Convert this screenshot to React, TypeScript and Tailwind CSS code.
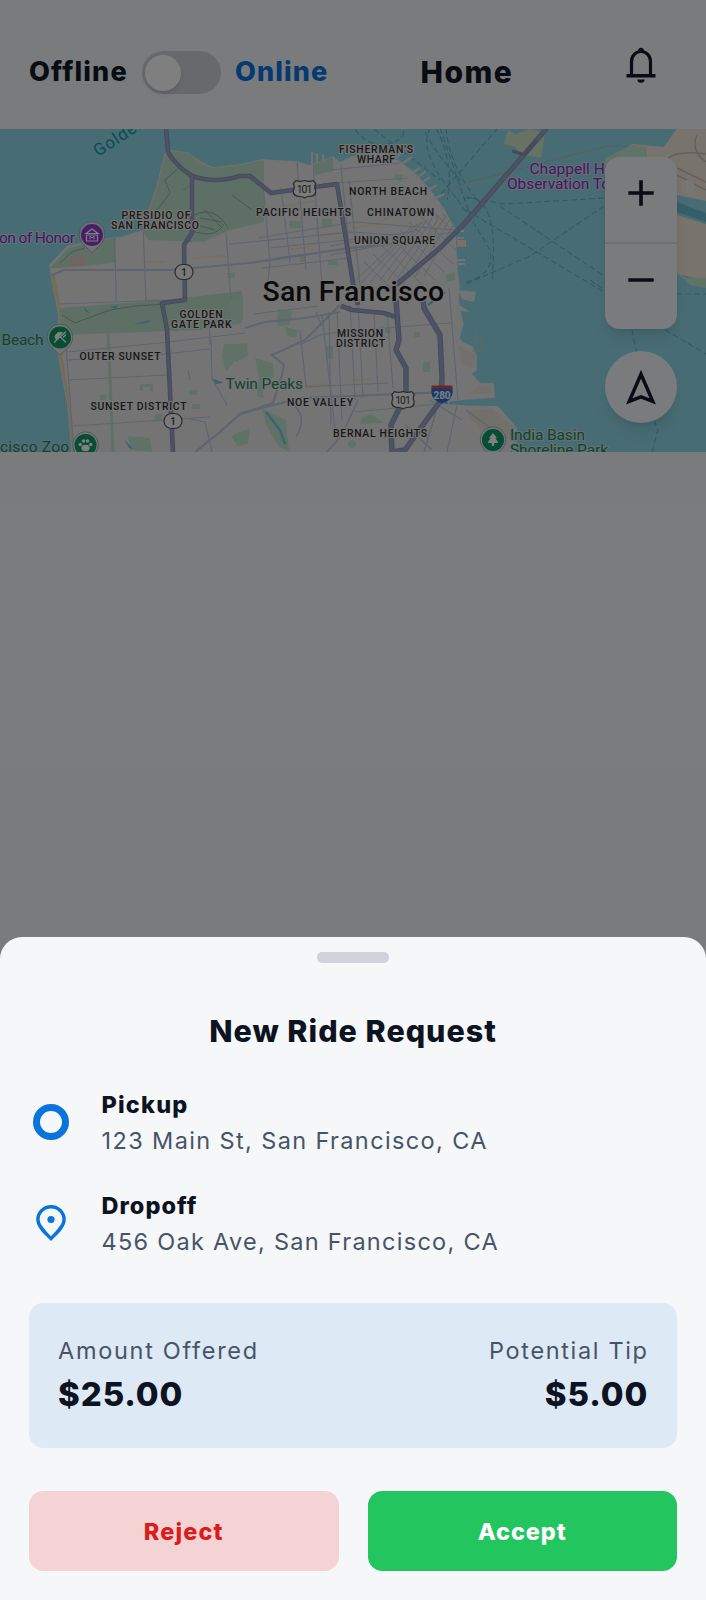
import type { ReactNode } from "react";

const LAND =
  "M167 151 L173 151 L187 153 L200 162 L213 168 L240 165 L262 160 L297 162 L310 166 L333 157 L340 163 L352 157 L380 152 L397 160 L413 172 L428 188 L443 208 L455 230 L456 252 L457 270 L459 287 L458 300 L460 312 L463 324 L459 338 L463 343 L472 347 L476 356 L476 370 L471 374 L480 384 L493 384 L494 397 L466 399 L448 401 L448 405 L466 406 L498 407 L516 428 L516 453 L72 453 L68 405 L58 352 L59 315 L52 280 L50 265 L67 247 L93 241 L123 237 L143 231 L148 213 L157 187 L165 155 Z";

function Street({ d, w = 1.2 }: { d: string; w?: number }) {
  return <path d={d} fill="none" stroke="#bfc8dc" strokeWidth={w} />;
}

function Highway({ d, w = 4.6 }: { d: string; w?: number }) {
  return (
    <g fill="none" strokeLinejoin="round">
      <path d={d} stroke="#8993b8" strokeWidth={w} />
      <path d={d} stroke="#9ca6c8" strokeWidth={w - 2} />
    </g>
  );
}

type LabelProps = {
  x: number;
  y: number;
  w: number;
  size?: number;
  fill?: string;
  weight?: number;
  halo?: string;
  children: string;
};

function Label({ x, y, w, size = 10.4, fill = "#303030", weight = 500, halo = "#eaeaea", children }: LabelProps) {
  return (
    <text
      x={x}
      y={y}
      textLength={w}
      fontSize={size}
      fontWeight={weight}
      fill={fill}
      stroke={halo}
      strokeWidth={2.2}
      strokeLinejoin="round"
      paintOrder="stroke"
    >
      {children}
    </text>
  );
}

function Pin({ x, y, fill, children }: { x: number; y: number; fill: string; children: ReactNode }) {
  return (
    <g transform={`translate(${x} ${y})`}>
      <path d="M0 17.5 C-3 14 -12.8 9 -12.8 -0.5 A12.8 12.8 0 0 1 12.8 -0.5 C12.8 9 3 14 0 17.5Z" fill="#e6e9ea" stroke="#8fa5aa" strokeWidth="0.8" />
      <circle r="11" fill={fill} />
      {children}
    </g>
  );
}

function StateRoute({ x, y }: { x: number; y: number }) {
  return (
    <g>
      <rect x={x - 9} y={y - 7.5} width="18" height="15" rx="7.5" fill="#f2f2f2" stroke="#555" strokeWidth="1.2" />
      <text x={x} y={y + 4} textAnchor="middle" fontSize="10.5" fontWeight="500" fill="#444">1</text>
    </g>
  );
}

function UsRoute({ x, y }: { x: number; y: number }) {
  return (
    <g transform={`translate(${x} ${y})`}>
      <path d="M-8.5 -8.5 Q-5 -6.8 0 -8.5 Q5 -6.8 8.5 -8.5 L11.2 -5.5 Q9.4 -2 11 1 Q12 6 7 7.3 Q2.5 7 0 9 Q-2.5 7 -7 7.3 Q-12 6 -11 1 Q-9.4 -2 -11.2 -5.5Z" fill="#f2f2f2" stroke="#555" strokeWidth="1.2" />
      <text x="0" y="3.8" textAnchor="middle" fontSize="10.4" textLength="15.5" fill="#444">101</text>
    </g>
  );
}

const VERTICALS = [
  "M114 230 L116 285 L116 302", "M143 225 L146 302", "M226 233 L231 300", "M297 162 L306 270", "M263 184 L270 262 L266 300",
  "M281 188 L290 262", "M313 162 L322 285", "M341 165 L352 280", "M349 180 L360 285", "M322 315 L335 430", "M329 312 L331 424",
  "M337 312 L342 420", "M350 305 L355 400", "M358 305 L363 398", "M374 312 L378 392", "M387 312 L393 388", "M300 330 L306 386",
  "M316 312 L322 326", "M449 288 L458 400 L447 452", "M211 340 L212 378 L227 405", "M188 370 L190 380", "M66 345 L74 452", "M209 312 L210 345",
];
const HORIZONTALS = [
  "M60 304 L168 300", "M67 352 L160 343 L245 333", "M68 360 L165 354 L210 349", "M69 380 L167 375", "M73 426 L165 420 L210 417",
  "M258 238 L355 222 L455 230", "M230 244 L352 232 L440 238", "M270 248 L357 239", "M275 258 L356 248", "M262 268 L350 258",
  "M330 255 L452 232", "M330 246 L420 230", "M254 314 L318 306", "M305 387 L388 383", "M300 345 L320 335 L345 331 L450 323",
  "M305 399 L450 391", "M354 412 L460 402", "M185 418 L205 422 L212 452", "M330 170 L400 163", "M322 184 L408 178",
];

function CityMap() {
  return (
    <svg viewBox="0 129 706 323" className="block h-[323px] w-full shrink-0 font-['Roboto',sans-serif]">
      <defs>
        <clipPath id="land"><path d={LAND} /></clipPath>
      </defs>
      <rect x="0" y="128" width="706" height="324" fill="#90d8e9" />
      <g fill="none" stroke="#5cb7d0" strokeWidth="1.1" strokeDasharray="6 3">
        <path d="M355 129 Q370 150 392 143 Q410 135 400 128" />
        <path d="M374 129 L440 180 M440 128 L470 215 M446 128 Q450 170 482 205" />
        <path d="M430 128 Q418 150 450 190 Q470 215 490 250 Q495 275 466 282" />
        <path d="M498 128 L440 195 M500 206 L604 276 M604 198 L505 204 L466 197" />
        <path d="M466 210 L604 292 M604 206 L530 256 L466 284 M466 198 Q500 195 492 280" />
        <path d="M590 280 L640 315 L706 354 M632 330 L640 370 M654 420 L658 430 L652 452 M640 294 L706 294" />
        <path d="M436 128 Q455 165 447 200 M425 132 Q440 160 462 182" />
      </g>
      <path d="M430 203 L447 192 L466 183 L607 146 L640 147 L706 160" fill="none" stroke="#b1bec3" strokeWidth="1.2" />

      <path d="M677 128 H706 V201 L677 195 L640 180 L605 162 L632 144 L664 147Z" fill="#f0e6d8" />
      <path d="M605 158 L632 145 L647 147 V165 H605Z" fill="#bfe6cf" />
      <path d="M677 215 L706 224 V280 L677 274Z" fill="#f0e6d8" />
      <path d="M677 273 L687 278 L706 278 V288 L690 285Z" fill="#bfe6cf" />
      <path d="M677 202 L706 213 V222 L677 212Z" fill="#6bbdd7" />
      <g fill="none" stroke="#c8bfb4" strokeWidth="1.5">
        <path d="M666 160 Q675 150 706 154 M677 168 L706 182 M697 135 Q690 150 706 162 M677 175 L706 190" />
      </g>
      <circle cx="688" cy="187" r="7" fill="#eeeeec" />

      <path d={LAND} fill="#e9e9ea" stroke="#e6e6e6" strokeWidth="1.5" />
      <g fill="none" stroke="#e5e5e5" strokeWidth="2.2">
        <path d="M312 165 V152 M317 164 V153 M323 163 V154 M397 158 L403 150 M403 163 L412 157 M412 173 L420 168 M416 179 L426 171 M420 184 L430 177 M427 191 L437 185 M434 199 L444 194 M455 231 H464 M457 238 H464 M457 260 H465 M458 264 H465" />
      </g>
      <path d="M458 290 L476 292 L474 302 L462 299Z M460 305 L470 312 L460 311Z" fill="#e7e7e7" />
      <path d="M466 342 H476 V332 M472 351 H482 V337" fill="none" stroke="#c2d2b8" strokeWidth="1.2" />
      <path d="M457 240 H466 V247 H457Z" fill="#efe4ca" />

      <g clipPath="url(#land)">
        <path d="M167 151 L187 151 L213 166 L264 160 L264 222 L230 230 L203 242 L148 240 L143 232 L150 205Z" fill="#bde0ca" />
        <path d="M50 268 L68 248 L116 236 L115 263 L62 268Z" fill="#bde0ca" />
        <path d="M70 258 L86 254 V266 H71Z" fill="#e0c8c8" />
        <path d="M60 308 L165 300 L242 291 V323 L200 330 L61 335Z" fill="#bde0ca" />
        <path d="M313 157 L333 157 L334 171 L315 175Z" fill="#bde0ca" />
        <path d="M51 275 L56 300 L58 350 L66 400 L70 453" fill="none" stroke="#ead9ad" strokeWidth="7" />
        <path d="M148 213 L157 187 L165 155 M195 160 L213 168 L240 165" fill="none" stroke="#ead9ad" strokeWidth="2" />
        <path d="M466 412 L492 408 L515 428 L512 440 L480 430Z M458 345 L475 355 L474 368 L462 364Z M478 386 H491 V394 H470Z" fill="#e6dfd6" />
        <g fill="#c0e4cf">
          <path d="M278 309 L292 311 L290 325 L277 326Z M285 327 L298 330 L296 338 L287 336Z M230 345 L247 343 L248 356 L236 362 L230 357Z M255 358 L273 363 L274 377 L262 384 L264 398 L257 396 L259 378Z M224 344 L238 344 L234 362 L226 371 L222 356Z" />
          <path d="M262 408 L286 420 L289 452 L278 446 L266 425Z M231 436 L250 428 L248 443 L238 447Z M128 436 L150 438 L152 452 L130 450Z M362 417 L371 414 L384 423 L360 424Z" />
          <path d="M326 346 H333 V359 H326Z M423 362 H430 V372 H423Z M385 328 H391 V333 H385Z M414 332 H420 V337 H414Z M289 221 H301 V228 H289Z M322 219 H332 V227 H322Z M395 174 L403 175 L401 182 L396 180Z M300 255 H306 V262 H300Z M349 268 H353 V277 H349Z M328 261 H338 V265 H328Z M227 273 H235 V278 H227Z M155 414 H162 V421 H155Z M100 395 H106 V400 H100Z M189 390 H197 V395 H189Z M140 384 H153 V391 H150 V387 H143 V391 H140Z M230 300 L243 295 V320 L232 325Z M192 404 H200 V409 H192Z M446 275 L455 272 V280 L447 282Z" />
          <circle cx="352" cy="444" r="4" />
        </g>
        <path d="M108 330 L113 452" stroke="#bde0ca" strokeWidth="3" />
        <g fill="none" stroke="#eddfc6" strokeWidth="2.2">
          <path d="M142 262 H164 M193 258 L225 256 M285 206 L315 201 M382 221 L410 205 M410 228 L424 222 M430 235 L445 218 M316 236 L340 233 M352 228 L380 224 M290 250 L312 246 M305 386 L330 384 M352 380 L372 379 M343 170 L352 168" />
        </g>
        <g fill="none" stroke="#86b09c" strokeWidth="0.9">
          <path d="M157 210 L170 193 L165 180 L182 165 M194 215 Q215 205 228 228 M200 218 L222 222 M197 225 L215 230 M205 210 L222 228 M190 230 Q215 240 224 224 M232 195 L252 210 M62 315 L75 323 L110 310 L135 306 L165 304 M60 263 L72 252 L85 248" />
        </g>
        <g fill="#7cc5e0">
          <path d="M83 306 L90 313 L86 312Z M110 307 L118 305 L116 309Z M133 324 L150 320 L148 323Z M211 378 L224 383 L215 384Z M182 190 L191 185 L184 190Z M124 439 L133 449 L129 448Z M187 236 L192 243 L188 241Z" />
        </g>
        {VERTICALS.map((d) => <Street key={d} d={d} />)}
        {HORIZONTALS.map((d) => <Street key={d} d={d} />)}
        <g fill="none" stroke="#bfc8dc" strokeWidth="1">
          {Array.from({ length: 9 }, (_, i) => (
            <path key={i} d={`M${352 + i * 9} ${284 - i * 1} L${392 + i * 9} ${246 - i * 5} L${412 + i * 5} ${226 - i * 2}`} />
          ))}
          {Array.from({ length: 9 }, (_, i) => (
            <path key={`c${i}`} d={`M${364 + i * 9} ${262 - i * 8} l44 42`} />
          ))}
        </g>
        <Street d="M50 276 L64 270 L170 270 L250 263 L350 248 L430 240" w={2.2} />
        <Street d="M340 305 L305 340 L272 355 L284 365 L282 375 L273 403 L240 414 L220 432 L195 452" w={2.2} />
        <Street d="M245 328 L265 322 L305 318 L340 312" w={2} />
        <Street d="M240 414 L300 398 L450 392" w={2} />
        <Street d="M288 400 Q310 415 296 437" w={1.6} />
        <Street d="M327 452 L342 435 L358 400" w={1.6} />
        <Street d="M430 400 L462 420 M436 412 L424 452 M405 425 L432 450 M466 410 L490 428" w={1.4} />
        <path d="M266 412 L280 430 L285 444 M445 403 H470" fill="none" stroke="#7cc5e0" strokeWidth="2.5" />
      </g>

      <path d="M508 130 L516 134 L530 129 L545 133 L541 158 L532 156 L524 157 L515 147 L504 144Z" fill="#cfe5cb" />
      <Highway d="M166 128 L168 152 Q175 165 192 176 Q215 184 240 176 L250 176 L271 193 L337 184 L353 283 L358 305" />
      <Highway d="M192 177 V233 L184 245 L185 300 L162 303 L167 330 L173 452" />
      <Highway d="M547 128 L466 222 L440 248 L396 285" w={5} />
      <path d="M512 151 L525 155 L536 140" fill="none" stroke="#8993b8" strokeWidth="3.2" />
      <Highway d="M341 306 L352 310 L384 313 L396 317" />
      <Highway d="M396 300 L399 340 L396 350 L406 368 L406 395 L391 425 L392 452 L405 450 L423 425 L441 400 L442 378 L440 335 L424 308 L423 300" w={5.4} />
      <path d="M428 305 L445 292" stroke="#7cc5e0" strokeWidth="2.5" />

      <g transform="rotate(-33 98 157)">
        <Label x={98} y={157} w={102} size={17} weight={400} fill="#1697a9" halo="#90d8e9">Golden Gate</Label>
      </g>
      <Label x={121.5} y={218.5} w={69}>PRESIDIO OF</Label>
      <Label x={111} y={228.5} w={88}>SAN FRANCISCO</Label>
      <Label x={339} y={153} w={74}>{"FISHERMAN'S"}</Label>
      <Label x={357} y={163} w={38}>WHARF</Label>
      <Label x={349} y={194.5} w={78}>NORTH BEACH</Label>
      <Label x={256} y={215.5} w={95}>PACIFIC HEIGHTS</Label>
      <Label x={367} y={215.5} w={67}>CHINATOWN</Label>
      <Label x={354} y={243.5} w={81}>UNION SQUARE</Label>
      <Label x={179.5} y={318} w={43}>GOLDEN</Label>
      <Label x={171} y={328} w={60.5}>GATE PARK</Label>
      <Label x={79.5} y={359.5} w={81}>OUTER SUNSET</Label>
      <Label x={90.5} y={409.5} w={96}>SUNSET DISTRICT</Label>
      <Label x={337} y={336.5} w={46}>MISSION</Label>
      <Label x={336} y={346.5} w={49}>DISTRICT</Label>
      <Label x={287} y={405.5} w={66}>NOE VALLEY</Label>
      <Label x={333} y={437} w={94}>BERNAL HEIGHTS</Label>
      <Label x={225.5} y={389} w={77.5} size={15.5} weight={400} fill="#27885e">Twin Peaks</Label>
      <Label x={262.5} y={301} w={181.5} size={28.4} weight={500} fill="#141414">San Francisco</Label>
      <Label x={-1} y={243} w={76} size={15.5} weight={400} fill="#7d35c0" halo="#cfe3ee">on of Honor</Label>
      <Label x={1.5} y={345} w={42} size={15.5} weight={400} fill="#1f8560" halo="#a6dae4">Beach</Label>
      <Label x={0} y={452} w={69} size={15.5} weight={400} fill="#1f8560" halo="#a6dae4">cisco Zoo</Label>
      <Label x={529.5} y={173.5} w={107} size={15.5} weight={400} fill="#7d35c0" halo="#d5d5ee">Chappell Hayes</Label>
      <Label x={507} y={189} w={128} size={15.5} weight={400} fill="#7d35c0" halo="#d5d5ee">Observation Tower</Label>
      <Label x={510} y={439.5} w={75} size={15.5} weight={400} fill="#1f8560" halo="#c9e2e2">India Basin</Label>
      <Label x={510} y={455} w={98} size={15.5} weight={400} fill="#1f8560" halo="#c9e2e2">Shoreline Park</Label>

      <StateRoute x={184} y={272} />
      <StateRoute x={173} y={421} />
      <UsRoute x={304.5} y={189} />
      <UsRoute x={403} y={400} />
      <path d="M431.5 388 H452.5 Q454 400 442 403.5 Q430 400 431.5 388Z" fill="#2f6fd0" />
      <path d="M431.5 385.5 H452.5 V388.5 H431.5Z" fill="#dd4a4a" />
      <text x="442" y="399" textAnchor="middle" fontSize="10" fontWeight="700" textLength="17" fill="#fff">280</text>

      <Pin x={92} y={235} fill="#8e3fd0">
        <path d="M-6 -1.5 L0 -6 L6 -1.5Z M-5.5 0 V6 H5.5 V0Z" fill="none" stroke="#fff" strokeWidth="1.2" />
        <path d="M-2 4.5 V1 L0 3 L2 1 V4.5" fill="none" stroke="#fff" strokeWidth="1" />
      </Pin>
      <Pin x={60} y={337.5} fill="#0b9a67">
        <path d="M-5.5 -1 A6 6 0 0 1 3 -5 L-4 3Z" fill="#fff" />
        <path d="M-6 5 L6 -6 M0 -1 L6 5 M3 0 L6 -3" stroke="#fff" strokeWidth="1.4" />
      </Pin>
      <Pin x={85.5} y={445} fill="#0b9a67">
        <g fill="#fff">
          <ellipse cx="0" cy="3" rx="4.2" ry="3.2" />
          <circle cx="-5.3" cy="-0.5" r="1.7" /><circle cx="-2" cy="-4" r="1.8" /><circle cx="2" cy="-4" r="1.8" /><circle cx="5.3" cy="-0.5" r="1.7" />
        </g>
      </Pin>
      <Pin x={493} y={440} fill="#0b9a67">
        <path d="M0 -7 L4 -2 H2.5 L5.5 3 H1.2 V6 H-1.2 V3 H-5.5 L-2.5 -2 H-4Z" fill="#fff" />
      </Pin>
    </svg>
  );
}

function BellIcon() {
  return (
    <svg viewBox="0 0 30 38" className="h-[38px] w-[30px]">
      <path d="M5.5 28 V14.5 A9.5 10 0 0 1 24.5 14.5 V28" fill="none" stroke="#101828" strokeWidth="3.2" />
      <path d="M0.5 27 H29.5 V30.4 H0.5Z M12.2 5.5 V3.6 A2.8 2.8 0 0 1 17.8 3.6 V5.5Z M11.4 32.6 H18.6 A3.6 3.2 0 0 1 11.4 32.6Z" fill="#101828" />
    </svg>
  );
}

function Header() {
  return (
    <header className="flex h-[129px] shrink-0 items-center bg-[#f5f7f9] pt-4 text-[#101828]">
      <div className="ml-[29px] w-[112.5px] text-[27px] font-extrabold tracking-[1.2px]">Offline</div>
      <div className="flex h-[43px] w-[79px] items-center rounded-full bg-[#d0d2da] px-[3px]">
        <div className="h-9 w-9 rounded-full bg-white shadow-md" />
      </div>
      <div className="ml-[14.5px] w-[185.5px] text-[27px] font-extrabold tracking-[1.1px] text-[#0a74e0]">Online</div>
      <div className="w-[205.5px] text-[30px] font-extrabold tracking-[1.5px]">Home</div>
      <div className="-mt-[14px]"><BellIcon /></div>
    </header>
  );
}

function MapControls() {
  return (
    <div className="absolute top-[28px] right-[29px] flex flex-col gap-[22px]">
      <div className="flex h-[172px] w-[72px] flex-col overflow-hidden rounded-[14.5px] bg-[#f5f7f9] shadow-lg">
        <button className="flex h-[87px] justify-center border-b-2 border-[#dcdee3] pt-[23px]">
          <svg viewBox="0 0 26 26" className="h-[26px] w-[26px]"><path d="M0.3 13 H25.7 M13 0.3 V25.7" stroke="#101828" strokeWidth="3.6" /></svg>
        </button>
        <button className="flex flex-1 justify-center pt-[23px]">
          <svg viewBox="0 0 26 26" className="h-[26px] w-[26px]"><path d="M0.3 13 H25.7" stroke="#101828" strokeWidth="3.6" /></svg>
        </button>
      </div>
      <button className="flex h-[72px] w-[72px] items-center justify-center rounded-full bg-[#f5f7f9] shadow-lg">
        <svg viewBox="0 0 30 36" className="h-9 w-[30px]">
          <path d="M15 5.2 L26.8 32.4 L15 27.8 L3.2 32.4Z" fill="none" stroke="#101828" strokeWidth="3.5" strokeLinejoin="miter" strokeMiterlimit="2.6" />
        </svg>
      </button>
    </div>
  );
}

type StopProps = { icon: ReactNode; title: string; titleClass: string; address: string; addressClass: string };

function Stop({ icon, title, titleClass, address, addressClass }: StopProps) {
  return (
    <div className="flex h-[72px] items-center gap-[29.5px]">
      <div className="flex w-[43px] justify-center">{icon}</div>
      <div className="pt-0.5 leading-[36px] whitespace-nowrap">
        <div className={`text-[23.5px] font-extrabold ${titleClass}`}>{title}</div>
        <div className={`text-[23.5px] text-[#475467] ${addressClass}`}>{address}</div>
      </div>
    </div>
  );
}

function RideSheet() {
  return (
    <section className="absolute inset-x-0 bottom-0 flex h-[663px] flex-col rounded-t-[22px] bg-[#f5f7f9] px-[29px] text-[#0d1321]">
      <div className="mt-[15px] h-[11px] w-[72px] shrink-0 self-center rounded-[5px] bg-[#d0d3db]" />
      <h1 className="mt-[46px] text-center text-[30.5px] leading-[44px] font-extrabold tracking-[0.98px]">New Ride Request</h1>
      <div className="mt-[33px] flex flex-col gap-[29px]">
        <Stop
          icon={<div className="h-9 w-9 rounded-full border-[7px] border-[#0a74dd]" />}
          title="Pickup"
          titleClass="tracking-[1.2px]"
          address="123 Main St, San Francisco, CA"
          addressClass="tracking-[1.38px]"
        />
        <Stop
          icon={
            <svg viewBox="0 0 30 36" className="h-9 w-[30px]">
              <path d="M15 33.6 C9 27.6 1.9 21.3 1.9 14.6 A13.1 12.9 0 0 1 28.1 14.6 C28.1 21.3 21 27.6 15 33.6Z" fill="none" stroke="#0a74dd" strokeWidth="3.4" />
              <circle cx="15" cy="14.5" r="3.6" fill="#0a74dd" />
            </svg>
          }
          title="Dropoff"
          titleClass="tracking-[1.05px]"
          address="456 Oak Ave, San Francisco, CA"
          addressClass="tracking-[1.28px]"
        />
      </div>
      <div className="mt-[44px] flex h-[145px] shrink-0 justify-between rounded-[14.5px] bg-[#dde9f5] px-[29px] pt-[30px] whitespace-nowrap">
        <div>
          <div className="text-[23.5px] leading-[36px] tracking-[1.7px] text-[#475467]">Amount Offered</div>
          <div className="text-[33px] leading-[51px] font-extrabold tracking-[0.9px]">$25.00</div>
        </div>
        <div className="text-right">
          <div className="-mr-[0.6px] text-[23.5px] leading-[36px] tracking-[1.65px] text-[#475467]">Potential Tip</div>
          <div className="-mr-[0.4px] text-[33px] leading-[51px] font-extrabold tracking-[0.95px]">$5.00</div>
        </div>
      </div>
      <div className="mt-[43px] grid h-20 grid-cols-2 gap-[29px] text-[23.5px] font-extrabold">
        <button className="rounded-[14.5px] bg-[#f4d3d4] pt-0.5 tracking-[1.1px] text-[#dc1c1c]">Reject</button>
        <button className="rounded-[14.5px] bg-[#22c55e] pt-0.5 tracking-[0.9px] text-white">Accept</button>
      </div>
    </section>
  );
}

export default function App() {
  return (
    <div className="relative flex h-[1600px] w-full flex-col overflow-hidden bg-[#f5f7f9] font-['Inter',sans-serif]">
      <Header />
      <main className="relative">
        <CityMap />
        <MapControls />
      </main>
      <div className="absolute inset-0 bg-black/50" />
      <RideSheet />
    </div>
  );
}
